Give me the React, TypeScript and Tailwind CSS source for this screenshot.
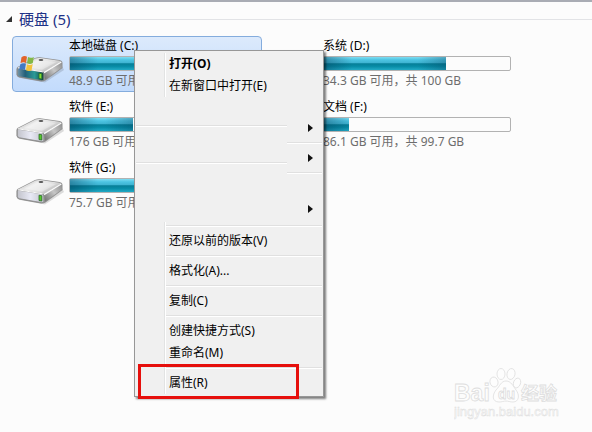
import React from 'react';
import clsx from 'clsx';

interface Drive {
  name: string;
  detail: string;
  used: number;
  system?: boolean;
  selected?: boolean;
}

const DRIVES: Drive[] = [
  { name: '本地磁盘 (C:)', detail: '48.9 GB 可用', used: 51, system: true, selected: true },
  { name: '系统 (D:)', detail: '34.3 GB 可用，共 100 GB', used: 65.5 },
  { name: '软件 (E:)', detail: '176 GB 可用', used: 34 },
  { name: '文档 (F:)', detail: '86.1 GB 可用，共 99.7 GB', used: 13.6 },
  { name: '软件 (G:)', detail: '75.7 GB 可用', used: 71 },
];

const DriveIcon: React.FC<{ system?: boolean }> = ({ system }) => (
  <svg width="50" height="46" viewBox="0 0 50 46" className="shrink-0" aria-hidden="true">
    <defs>
      <linearGradient id="driveTop" x1="0" y1="0" x2="1" y2="0.6">
        <stop offset="0" stopColor="#bdbdbd" />
        <stop offset="0.45" stopColor="#ececec" />
        <stop offset="0.7" stopColor="#e0e0e0" />
        <stop offset="1" stopColor="#b0b0b0" />
      </linearGradient>
      <linearGradient id="driveSide" x1="0" y1="0.8" x2="1" y2="0">
        <stop offset="0" stopColor="#7b7b7b" />
        <stop offset="0.5" stopColor="#c6c6c6" />
        <stop offset="1" stopColor="#8f8f8f" />
      </linearGradient>
      <linearGradient id="driveFront" x1="0" y1="0" x2="1" y2="0">
        <stop offset="0" stopColor="#c2c3cb" />
        <stop offset="0.5" stopColor="#e8e9f5" />
        <stop offset="1" stopColor="#c2c3cc" />
      </linearGradient>
      <linearGradient id="driveFrontSystem" x1="0" y1="0" x2="1" y2="0">
        <stop offset="0" stopColor="#7596a8" />
        <stop offset="0.3" stopColor="#23607a" />
        <stop offset="0.65" stopColor="#2a9a96" />
        <stop offset="1" stopColor="#0b3f3c" />
      </linearGradient>
    </defs>
    <path d="M5 41 L30 45.5 L49 33 L47 29 Z" fill="#000" opacity="0.13" />
    <path d="M1.5 32 Q1.5 30.5 3 29.7 L20 21 Q22.5 20 25 20.3 L44.5 23 Q47.5 23.5 47.5 26 L47.5 31 L30.5 43.4 Q28.5 44.8 26 44.4 L4 40.4 Q1.5 39.8 1.5 37.5 Z" fill="#919191" />
    <path d="M2.8 30.5 L20.5 21.6 Q22.5 20.7 25 21 L44.3 23.7 Q46.3 24 45.5 25 L30 34.6 Q28.5 35.6 26 35.2 Z" fill="url(#driveTop)" />
    <path d="M9 29.6 L22 22.8 L41 25.2 L27 32.8 Z" fill="#fff" opacity="0.3" />
    <path d="M29.3 36 L46.8 25.2 L46.8 30.6 L30 42.8 Z" fill="url(#driveSide)" />
    <path d="M29 35.6 L46.3 25" stroke="#fafafa" strokeWidth="1.4" fill="none" />
    <path
      d="M2.3 32 Q2.3 31 3.6 31.2 L26.6 34.8 Q28.8 35.2 28.8 37 L28.8 42.2 Q28.8 43.9 26.5 43.6 L4.6 39.8 Q2.3 39.4 2.3 37.4 Z"
      fill={system ? 'url(#driveFrontSystem)' : 'url(#driveFront)'}
      stroke="#8a8a8a"
      strokeWidth="0.8"
    />
    <path d="M3 30.8 L27.6 34.8" stroke="#fafafa" strokeWidth="1" fill="none" />
    <path d="M24 36.2 L26.8 36.7 L26.8 42 L24 41.5 Z" fill={system ? '#7fe032' : '#55c92a'} stroke="#2b6a2a" strokeWidth="0.8" />
    <ellipse cx="26" cy="23" rx="2.4" ry="1" fill="#555" />
    {system && (
      <g>
        <path d="M6.5 20.2 Q9.5 18.2 12 19.7 L11 25.9 Q8 24.5 5.5 26.2 Z" fill="#e2632a" />
        <path d="M13 20.1 Q16 21.5 18.8 19.9 L17.8 26 Q15 27.7 12 26.2 Z" fill="#83b845" />
        <path d="M5.3 27.2 Q8 25.6 10.9 26.9 L10 32.9 Q7 31.6 4 33.3 Z" fill="#4279c4" />
        <path d="M11.9 27.2 Q14.6 28.7 17.7 27 L16.6 33.2 Q13.9 34.9 10.9 33.3 Z" fill="#f2c23c" />
      </g>
    )}
  </svg>
);

const DriveTile: React.FC<{ drive: Drive }> = ({ drive }) => (
  <li
    className={clsx(
      'flex h-14 rounded-sm border pr-1 pl-[2px]',
      drive.selected ? 'border-[#84acdd] bg-linear-to-b from-[#dceafc] to-[#c2dbfc]' : 'border-transparent',
    )}
  >
    <DriveIcon system={drive.system} />
    <div className="ml-1 min-w-0 flex-1 pt-px text-xs leading-4 whitespace-nowrap">
      <p className="mb-[2px] text-black">{drive.name}</p>
      <div className="h-[15px] rounded-xs border border-[#b2b2b2] bg-[#fcfcfc]">
        <div
          className="h-full bg-[linear-gradient(90deg,rgba(0,50,80,0.4)_0,transparent_28px,transparent_calc(100%-28px),rgba(0,50,80,0.3)_100%),linear-gradient(180deg,#7fdcf2_0%,#4cc4e2_22%,#3fb4d2_44%,#067f98_52%,#078ba5_72%,#22aac6_100%)]"
          style={{ width: `${drive.used}%` }}
        />
      </div>
      <p className="mt-[2px] text-[#6d6d6d]">{drive.detail}</p>
    </div>
  </li>
);

const Separator: React.FC<{ full?: boolean }> = ({ full }) => (
  <div role="separator" className={clsx('flex h-2 shrink-0 items-center', !full && 'pl-[30px]')}>
    <div className="h-[2px] flex-1 border-t border-[#e0e0e0] bg-white" />
  </div>
);

const MenuItem: React.FC<{ label: string; bold?: boolean }> = ({ label, bold }) => (
  <button
    type="button"
    role="menuitem"
    className={clsx('block h-[22px] w-full pl-[33px] text-left leading-[22px]', bold && 'font-bold')}
  >
    {label}
  </button>
);

const SubmenuButton: React.FC = () => (
  <button type="button" role="menuitem" aria-haspopup="menu" className="flex h-[22px] w-full items-center pl-[21px]">
    <svg width="5" height="8" viewBox="0 0 5 8" aria-hidden="true">
      <path d="M0 0 L5 4 L0 8 Z" fill="#111" />
    </svg>
  </button>
);

const Gutter: React.FC<{ children: React.ReactNode }> = ({ children }) => (
  <div className="bg-[linear-gradient(90deg,#e2e3e3_50%,#fff_50%)] bg-[length:2px_100%] bg-[position:28px_0] bg-no-repeat">
    {children}
  </div>
);

const ContextMenu: React.FC = () => (
  <div
    role="menu"
    className="absolute top-12 left-[134px] w-[190px] border border-[#979797] bg-[#f0f0f0] px-px py-[2px] text-xs text-black shadow-[2px_2px_2px_rgba(0,0,0,0.5)]"
  >
    <Gutter>
      <MenuItem label="打开(O)" bold />
      <MenuItem label="在新窗口中打开(E)" />
    </Gutter>
    <div className="flex h-[125px]">
      <div className="flex flex-1 flex-col gap-[29px] pt-[25px]">
        <Separator full />
        <Separator full />
      </div>
      <div className="flex w-[35px] flex-col pt-5">
        <SubmenuButton />
        <Separator full />
        <SubmenuButton />
        <Separator full />
        <div className="mt-[21px]">
          <SubmenuButton />
        </div>
      </div>
    </div>
    <Gutter>
      <Separator />
      <MenuItem label="还原以前的版本(V)" />
      <Separator />
      <MenuItem label="格式化(A)..." />
      <Separator />
      <MenuItem label="复制(C)" />
      <Separator />
      <MenuItem label="创建快捷方式(S)" />
      <MenuItem label="重命名(M)" />
      <Separator />
      <div className="relative">
        <MenuItem label="属性(R)" />
        {/* highlight around the properties entry */}
        <div className="pointer-events-none absolute -top-2 -bottom-[5px] left-[2px] w-[161px] border-3 border-[#e60f0c]" />
      </div>
    </Gutter>
  </div>
);

const Watermark: React.FC = () => (
  <div className="absolute right-8 bottom-3 w-[106px]">
    <svg viewBox="0 0 106 52" className="block w-full" fill="#fdfdfd" stroke="#dedede" strokeWidth="0.8">
      <g fontFamily='"Liberation Sans", "Noto Sans CJK SC", sans-serif' fontWeight="bold">
        <text x="0" y="33" fontSize="23">Bai</text>
        <text x="67" y="32" fontSize="18">经验</text>
        <ellipse cx="40" cy="14" rx="4" ry="5" transform="rotate(-15 40 14)" />
        <ellipse cx="47" cy="6" rx="4" ry="5.5" />
        <ellipse cx="57" cy="6" rx="4" ry="5.5" transform="rotate(12 57 6)" />
        <ellipse cx="63" cy="15" rx="3.5" ry="5" transform="rotate(20 63 15)" />
        <path d="M52 13 C57 13 59 18 62 22 C66 27 65 34 59 34 C56 34 54 33 52 33 C50 33 48 34 45 34 C38 34 38 27 42 22 C46 18 47 13 52 13 Z" />
        <text x="44" y="31" fontSize="14">du</text>
        <text x="0" y="48" fontSize="13" strokeWidth="0.5" fontWeight="normal">jingyan.baidu.com</text>
      </g>
    </svg>
  </div>
);

const App: React.FC = () => {
  return (
    <div className='relative min-h-screen overflow-hidden border-t-2 border-[#a9acb4] bg-[#fcfcfc] font-["Noto_Sans","Noto_Sans_CJK_SC",sans-serif]'>
      <main>
        <header className="flex h-[34px] items-center pl-[6px]">
          <svg width="7" height="6" viewBox="0 0 7 6" className="mr-[6px]" aria-hidden="true">
            <path d="M6 0 L6 6 L0 6 Z" fill="#333" />
          </svg>
          <h1 className="text-[15px] leading-5 text-[#1e3287]">硬盘 (5)</h1>
          <div className="ml-2 h-px flex-1 bg-[#e2e3e6]" />
        </header>

        <ul className="grid grid-cols-[repeat(auto-fill,250px)] gap-x-1 gap-y-[5px] pl-3">
          {DRIVES.map((drive) => (
            <DriveTile key={drive.name} drive={drive} />
          ))}
        </ul>
      </main>

      <Watermark />
      <ContextMenu />
    </div>
  );
};

export default App;
